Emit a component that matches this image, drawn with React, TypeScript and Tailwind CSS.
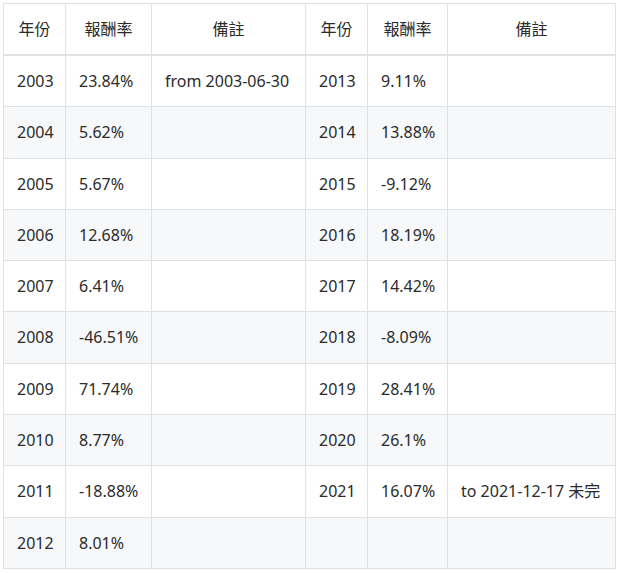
const rows: [string, string, string, string, string, string][] = [
  ["2003", "23.84%", "from 2003-06-30", "2013", "9.11%", ""],
  ["2004", "5.62%", "", "2014", "13.88%", ""],
  ["2005", "5.67%", "", "2015", "-9.12%", ""],
  ["2006", "12.68%", "", "2016", "18.19%", ""],
  ["2007", "6.41%", "", "2017", "14.42%", ""],
  ["2008", "-46.51%", "", "2018", "-8.09%", ""],
  ["2009", "71.74%", "", "2019", "28.41%", ""],
  ["2010", "8.77%", "", "2020", "26.1%", ""],
  ["2011", "-18.88%", "", "2021", "16.07%", "to 2021-12-17 未完"],
  ["2012", "8.01%", "", "", "", ""],
];

const headers = ["年份", "報酬率", "備註", "年份", "報酬率", "備註"];
const widths = ["w-[62px]", "w-[86px]", "w-[154px]", "w-[62px]", "w-[80px]", "w-[168px]"];

export default function App() {
  return (
    <div className="bg-white p-[3px] text-[16px] text-[#2b2b2b] font-['Noto_Sans','Noto_Sans_CJK_TC',sans-serif]">
      <table className="table-fixed border-collapse w-[612px]">
        <colgroup>
          {widths.map((w, i) => (
            <col key={i} className={w} />
          ))}
        </colgroup>
        <thead>
          <tr>
            {headers.map((h, i) => (
              <th
                key={i}
                className="border border-[#dfe2e5] border-b-2 px-[13px] py-3 leading-[26px] font-normal text-center"
              >
                {h}
              </th>
            ))}
          </tr>
        </thead>
        <tbody>
          {rows.map((r, i) => (
            <tr key={i} className={i % 2 === 1 ? "bg-[#f6f8fa]" : "bg-white"}>
              {r.map((c, j) => (
                <td
                  key={j}
                  className="border border-[#dfe2e5] px-[13px] py-3 leading-[26.3px] whitespace-nowrap"
                >
                  {c}
                </td>
              ))}
            </tr>
          ))}
        </tbody>
      </table>
    </div>
  );
}
